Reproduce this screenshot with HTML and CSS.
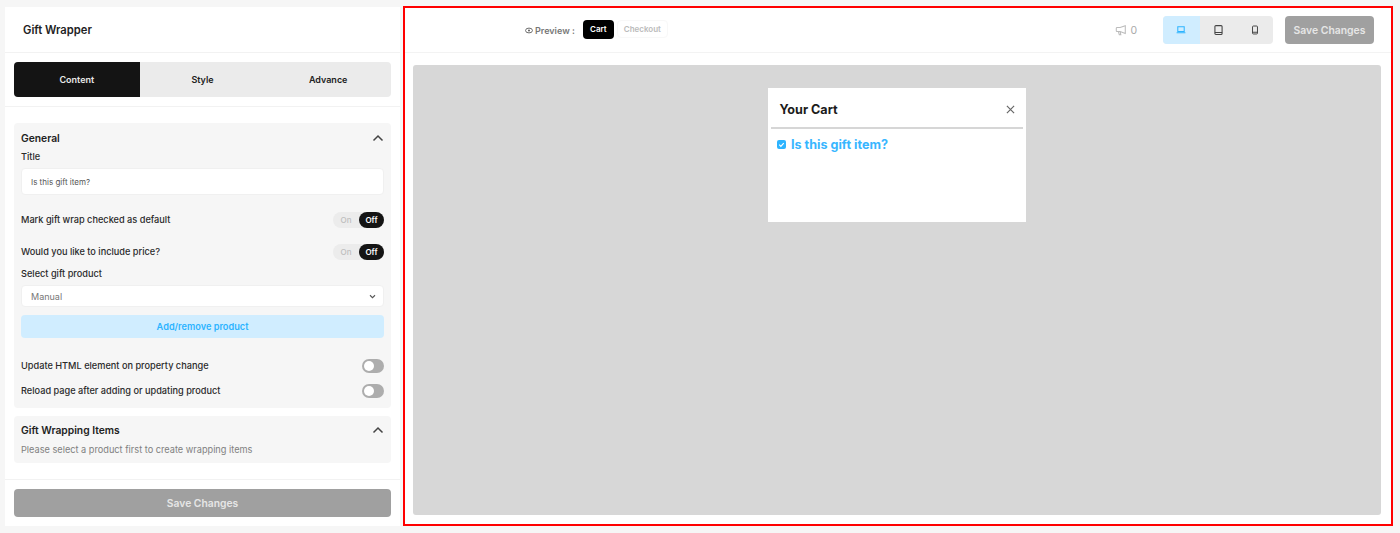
FILE: index.html
```html
<!DOCTYPE html>
<html lang="en">
<head>
<meta charset="utf-8">
<title>Gift Wrapper</title>
<link rel="stylesheet" href="styles.css">
</head>
<body>
<div class="app">
  <aside class="side">
    <div class="side-head">Gift Wrapper</div>
    <div class="tabs-wrap">
      <div class="tabs">
        <div class="tab active">Content</div>
        <div class="tab">Style</div>
        <div class="tab">Advance</div>
      </div>
    </div>
    <div class="side-body">
      <section class="card general">
        <div class="card-head">
          <h2>General</h2>
          <svg class="chev" viewBox="0 0 12 8" width="12" height="8"><path d="M1.5 6.500 6 2l4.500 4.500" fill="none" stroke="#444" stroke-width="1.500"/></svg>
        </div>
        <div class="label title-label">Title</div>
        <div class="field title-field">Is this gift item?</div>
        <div class="row row-a">
          <span class="label">Mark gift wrap checked as default</span>
          <span class="seg"><span class="seg-on">On</span><span class="seg-off">Off</span></span>
        </div>
        <div class="row row-b">
          <span class="label">Would you like to include price?</span>
          <span class="seg"><span class="seg-on">On</span><span class="seg-off">Off</span></span>
        </div>
        <div class="label select-label">Select gift product</div>
        <div class="field select">
          <span>Manual</span>
          <svg viewBox="0 0 8 6" width="7" height="5"><path d="M1 1.500 4 4.500 7 1.500" fill="none" stroke="#555" stroke-width="1.300"/></svg>
        </div>
        <div class="add-btn">Add/remove product</div>
        <div class="row row-c">
          <span class="label">Update HTML element on property change</span>
          <span class="switch"></span>
        </div>
        <div class="row row-d">
          <span class="label">Reload page after adding or updating product</span>
          <span class="switch"></span>
        </div>
      </section>
      <section class="card items">
        <div class="card-head">
          <h2>Gift Wrapping Items</h2>
          <svg class="chev" viewBox="0 0 12 8" width="12" height="8"><path d="M1.5 6.500 6 2l4.500 4.500" fill="none" stroke="#444" stroke-width="1.500"/></svg>
        </div>
        <p class="hint">Please select a product first to create wrapping items</p>
      </section>
    </div>
    <div class="side-foot"><div class="save wide">Save Changes</div></div>
  </aside>
  <main class="preview">
    <header class="top">
      <div class="preview-switch">
        <svg viewBox="0 0 10 8" width="8" height="7"><ellipse cx="5" cy="4" rx="4.300" ry="3" fill="none" stroke="#666" stroke-width="1.200"/><circle cx="5" cy="4" r="1.300" fill="#666"/></svg>
        <span class="preview-label">Preview :</span>
        <span class="pill pill-on">Cart</span>
        <span class="pill pill-off">Checkout</span>
      </div>
      <div class="top-right">
        <div class="count">
          <svg viewBox="0 0 14 14" width="12" height="12"><path d="M12 2v9L6 8.800H2.500a1 1 0 0 1-1-1V5a1 1 0 0 1 1-1H6zM4 9l1 3.500h1.800L6 9" fill="none" stroke="#bbb" stroke-width="1.200"/></svg>
          <span>0</span>
        </div>
        <div class="devices">
          <div class="device device-on">
            <svg viewBox="0 0 12 10" width="10" height="8"><path d="M2 1h8v6H2zM.5 8.500h11" fill="none" stroke="#2db4ff" stroke-width="1.300"/></svg>
          </div>
          <div class="device">
            <svg viewBox="0 0 10 12" width="9" height="10"><rect x=".7" y=".7" width="8.600" height="10.600" rx="1.200" fill="none" stroke="#444" stroke-width="1.300"/><path d="M.7 9h8.600" stroke="#444" stroke-width="1.300"/></svg>
          </div>
          <div class="device">
            <svg viewBox="0 0 8 12" width="6" height="10"><rect x=".7" y=".7" width="6.600" height="10.600" rx="1.200" fill="none" stroke="#444" stroke-width="1.300"/><path d="M.7 9h6.600" stroke="#444" stroke-width="1.300"/></svg>
          </div>
        </div>
        <div class="save narrow">Save Changes</div>
      </div>
    </header>
    <div class="stage-wrap">
      <div class="stage">
        <div class="cart">
          <div class="cart-head">
            <span>Your Cart</span>
            <svg viewBox="0 0 10 10" width="9" height="9"><path d="M1 1l8 8M9 1 1 9" stroke="#666" stroke-width="1.300"/></svg>
          </div>
          <div class="cart-line"></div>
          <div class="gift">
            <span class="check"><svg viewBox="0 0 10 10" width="9" height="9"><path d="M2.500 5.200 4.300 7l3.200-3.600" fill="none" stroke="#fff" stroke-width="1.300"/></svg></span>
            <span>Is this gift item?</span>
          </div>
        </div>
      </div>
    </div>
  </main>
</div>
</body>
</html>
```
FILE: styles.css
```css
* { box-sizing: border-box; }
html, body { margin: 0; padding: 0; }
body {
  width: 1400px;
  height: 533px;
  overflow: hidden;
  background: #f6f6f6;
  font-family: Inter, "Liberation Sans", sans-serif;
  color: #222;
}
.app {
  display: flex;
  align-items: flex-start;
  height: 533px;
  padding: 6px 0 0 5px;
}

/* Left panel */
.side {
  width: 395px;
  height: 519px;
  margin-top: 1px;
  background: #fff;
  display: flex;
  flex-direction: column;
}
.side-head {
  height: 46px;
  padding: 0 18px;
  display: flex;
  align-items: center;
  font-size: 11.200px;
  font-weight: 600;
  color: #222;
  border-bottom: 1px solid #f2f2f2;
}
.tabs-wrap {
  height: 54px;
  padding: 9px 9px 0;
  border-bottom: 1px solid #f2f2f2;
}
.tabs {
  display: flex;
  height: 35px;
  border-radius: 4px;
  background: #ebebeb;
  overflow: hidden;
}
.tab {
  flex: 1;
  display: flex;
  align-items: center;
  justify-content: center;
  font-size: 9px;
  font-weight: 600;
  color: #222;
}
.tab.active { background: #141414; color: #e8e8e8; }
.side-body {
  flex: 1;
  padding: 16px 9px 0;
}
.card {
  background: #f6f6f6;
  border-radius: 4px;
  padding: 0 7px;
}
.general { height: 285px; }
.items { height: 47px; margin-top: 8px; }
.card-head {
  display: flex;
  align-items: center;
  justify-content: space-between;
}
.general .card-head { height: 29px; }
.items .card-head { height: 28px; }
h2 {
  margin: 0;
  font-size: 10.300px;
  font-weight: 600;
  color: #222;
}
.label {
  font-size: 9.200px;
  font-weight: 500;
  color: #2a2a2a;
  line-height: 12px;
}
.title-label { height: 12px; margin-top: -1px; }
.field {
  background: #fff;
  border: 1px solid #f0f0f0;
  border-radius: 4px;
  color: #555;
}
.title-field {
  height: 27px;
  margin-top: 5px;
  width: 363px;
  padding: 0 9px;
  display: flex;
  align-items: center;
  font-size: 8px;
}
.row {
  display: flex;
  align-items: center;
  justify-content: space-between;
}
.row-a { height: 18px; margin-top: 16px; }
.row-b { height: 18px; margin-top: 14px; }
.seg {
  display: flex;
  width: 51px;
  height: 16px;
  background: #ececec;
  border-radius: 8px;
  font-size: 8px;
  font-weight: 600;
}
.seg-on {
  flex: 1;
  display: flex;
  align-items: center;
  justify-content: center;
  color: #bdbdbd;
  font-weight: 500;
}
.seg-off {
  width: 25px;
  display: flex;
  align-items: center;
  justify-content: center;
  background: #141414;
  color: #fff;
  border-radius: 8px;
}
.select-label { margin-top: 7px; height: 12px; }
.select {
  height: 22px;
  margin-top: 5px;
  width: 363px;
  padding: 0 7px 0 9px;
  display: flex;
  align-items: center;
  justify-content: space-between;
  font-size: 9px;
  color: #777;
}
.add-btn {
  height: 23px;
  margin-top: 8px;
  background: #d0edff;
  border-radius: 4px;
  color: #2db4ff;
  font-size: 9.200px;
  font-weight: 600;
  display: flex;
  align-items: center;
  justify-content: center;
}
.row-c { height: 14px; margin-top: 21px; }
.row-d { height: 14px; margin-top: 11px; }
.switch {
  position: relative;
  width: 22px;
  height: 14px;
  border-radius: 7px;
  background: #adadad;
}
.switch::before {
  content: "";
  position: absolute;
  left: 2px;
  top: 2px;
  width: 10px;
  height: 10px;
  border-radius: 50%;
  background: #fff;
}
.hint {
  margin: 0;
  font-size: 9.200px;
  line-height: 12px;
  color: #808080;
}
.side-foot {
  height: 47px;
  padding: 9px 9px 0;
  border-top: 1px solid #f2f2f2;
}
.save {
  background: #a0a0a0;
  color: #e6e6e6;
  font-weight: 600;
  border-radius: 4px;
  display: flex;
  align-items: center;
  justify-content: center;
}
.save.wide { height: 28px; font-size: 10.300px; }
.save.narrow { width: 89px; height: 28px; font-size: 10.400px; }

/* Right panel */
.preview {
  width: 990px;
  height: 520px;
  margin-left: 3px;
  background: #fff;
  border: 2px solid #f00;
  display: flex;
  flex-direction: column;
}
.top {
  height: 45px;
  border-bottom: 1px solid #f3f3f3;
  display: flex;
  align-items: center;
  justify-content: space-between;
  padding: 0 17px 0 120px;
}
.preview-switch {
  display: flex;
  align-items: center;
  font-size: 9px;
  font-weight: 600;
  color: #777;
}
.preview-label { margin-left: 2px; }
.pill {
  display: flex;
  align-items: center;
  justify-content: center;
  font-size: 8px;
  font-weight: 600;
  border-radius: 4px;
  position: relative;
  top: -1px;
}
.pill-on { background: #000; color: #fff; margin-left: 8px; width: 31px; height: 19px; }
.pill-off { color: #bbb; border: 1px solid #f8f8f8; width: 51px; height: 18px; margin-left: 3px; }
.top-right { display: flex; align-items: center; }
.count {
  display: flex;
  align-items: center;
  gap: 3px;
  font-size: 10.500px;
  color: #aaa;
  margin-right: 26px;
}
.devices {
  display: flex;
  width: 110px;
  height: 28px;
  background: #ebebeb;
  border-radius: 4px;
  overflow: hidden;
  margin-right: 12px;
}
.device {
  flex: 1;
  display: flex;
  align-items: center;
  justify-content: center;
}
.device-on { background: #d0edff; }
.stage-wrap {
  flex: 1;
  padding: 12px 10px 9px 8px;
}
.stage {
  height: 100%;
  background: #d7d7d7;
  border-radius: 3px;
  padding-top: 23px;
  display: flex;
  justify-content: center;
  align-items: flex-start;
  padding-right: 1px;
}
.cart {
  width: 258px;
  height: 133.500px;
  background: #fff;
  padding: 0 3px;
}
.cart-head {
  height: 39px;
  display: flex;
  align-items: center;
  justify-content: space-between;
  padding: 3px 8px 0 9px;
  font-size: 12.600px;
  font-weight: 700;
  color: #1c1c1c;
}
.cart-line { height: 2px; background: #d6d6d6; }
.gift {
  display: flex;
  align-items: center;
  gap: 5.500px;
  padding: 8px 0 0 6px;
  color: #38b6ff;
  font-size: 12.600px;
  font-weight: 700;
}
.check {
  width: 9px;
  height: 9px;
  border-radius: 2px;
  background: #2db4ff;
  display: flex;
}
```
